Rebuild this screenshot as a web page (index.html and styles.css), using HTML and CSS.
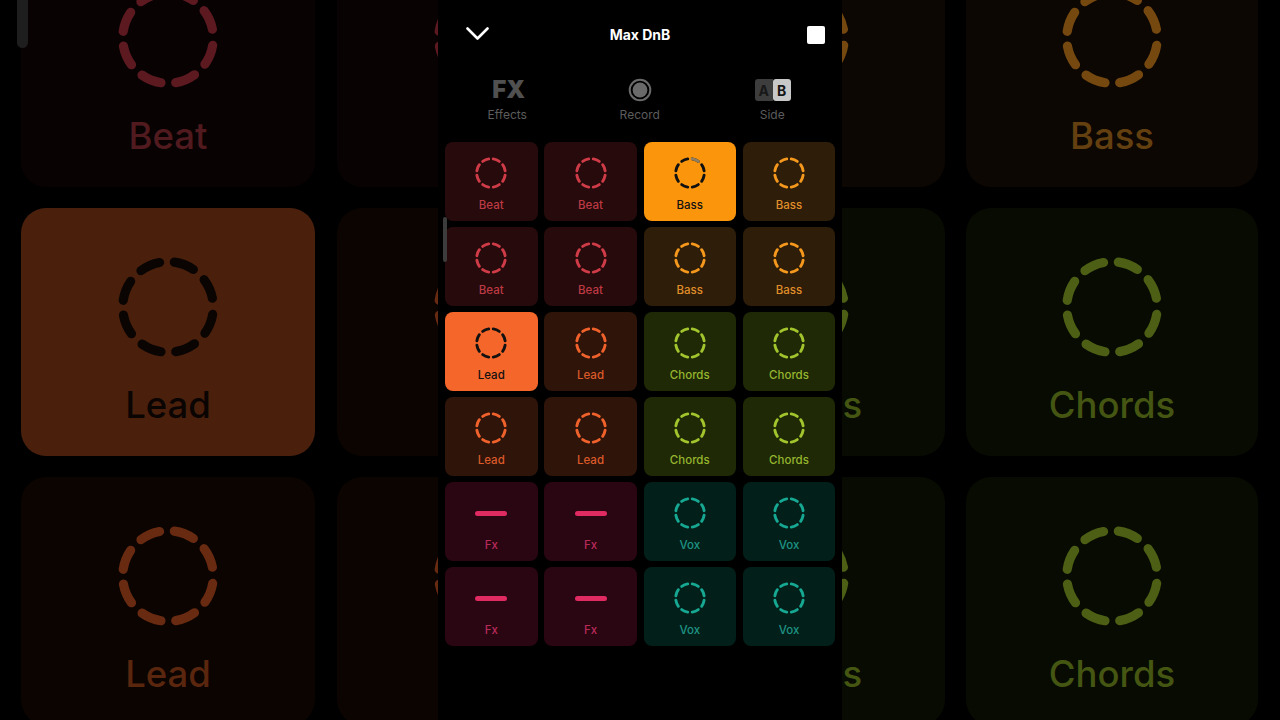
FILE: index.html
```html
<!DOCTYPE html>
<html lang="en">
<head>
<meta charset="utf-8">
<title>Max DnB</title>
<link rel="stylesheet" href="styles.css">
</head>
<body>
<svg class="defs" width="0" height="0" aria-hidden="true">
  <symbol id="ring" viewBox="0 0 36 36"><circle class="dash" cx="18" cy="18" r="14.3" pathLength="80"/></symbol>
</svg>
<main class="stage">
  <aside class="side side-left">
    <div class="big-grid">
      <div class="pad big dim-beat"><svg class="ring"><use href="#ring"/></svg><span class="label">Beat</span></div>
      <div class="pad big dim-beat"><svg class="ring"><use href="#ring"/></svg><span class="label">Beat</span></div>
      <div class="pad big dim-lead-on"><svg class="ring"><use href="#ring"/></svg><span class="label">Lead</span></div>
      <div class="pad big dim-lead"><svg class="ring"><use href="#ring"/></svg><span class="label">Lead</span></div>
      <div class="pad big dim-lead"><svg class="ring"><use href="#ring"/></svg><span class="label">Lead</span></div>
      <div class="pad big dim-lead"><svg class="ring"><use href="#ring"/></svg><span class="label">Lead</span></div>
    </div>
    <div class="scroll-big"></div>
  </aside>

  <section class="phone">
    <header class="topbar">
      <svg class="chevron" viewBox="0 0 23 13"><path d="M1.5 1.5l10 10 10-10"/></svg>
      <h1 class="title">Max DnB</h1>
      <span class="stop"></span>
    </header>
    <nav class="tabs">
      <div class="tab"><span class="tab-icon fx">FX</span><span class="tab-label">Effects</span></div>
      <div class="tab">
        <span class="tab-icon"><svg class="record" viewBox="0 0 24 24"><circle class="record-outer" cx="12" cy="12" r="10.3"/><circle class="record-inner" cx="12" cy="12" r="7.4"/></svg></span>
        <span class="tab-label">Record</span>
      </div>
      <div class="tab">
        <span class="tab-icon ab"><span class="ab-a">A</span><span class="ab-b">B</span></span>
        <span class="tab-label">Side</span>
      </div>
    </nav>
    <div class="scroll-small"></div>
    <div class="grid">
      <div class="pad beat"><svg class="ring"><use href="#ring"/></svg><span class="label">Beat</span></div>
      <div class="pad beat"><svg class="ring"><use href="#ring"/></svg><span class="label">Beat</span></div>
      <div class="pad bass-on"><svg class="ring" viewBox="0 0 36 36"><circle class="dash" cx="18" cy="18" r="14.3" pathLength="80"/><circle class="progress" cx="18" cy="18" r="14.3" pathLength="80"/></svg><span class="label">Bass</span></div>
      <div class="pad bass"><svg class="ring"><use href="#ring"/></svg><span class="label">Bass</span></div>

      <div class="pad beat"><svg class="ring"><use href="#ring"/></svg><span class="label">Beat</span></div>
      <div class="pad beat"><svg class="ring"><use href="#ring"/></svg><span class="label">Beat</span></div>
      <div class="pad bass"><svg class="ring"><use href="#ring"/></svg><span class="label">Bass</span></div>
      <div class="pad bass"><svg class="ring"><use href="#ring"/></svg><span class="label">Bass</span></div>

      <div class="pad lead-on"><svg class="ring"><use href="#ring"/></svg><span class="label">Lead</span></div>
      <div class="pad lead"><svg class="ring"><use href="#ring"/></svg><span class="label">Lead</span></div>
      <div class="pad chords"><svg class="ring"><use href="#ring"/></svg><span class="label">Chords</span></div>
      <div class="pad chords"><svg class="ring"><use href="#ring"/></svg><span class="label">Chords</span></div>

      <div class="pad lead"><svg class="ring"><use href="#ring"/></svg><span class="label">Lead</span></div>
      <div class="pad lead"><svg class="ring"><use href="#ring"/></svg><span class="label">Lead</span></div>
      <div class="pad chords"><svg class="ring"><use href="#ring"/></svg><span class="label">Chords</span></div>
      <div class="pad chords"><svg class="ring"><use href="#ring"/></svg><span class="label">Chords</span></div>

      <div class="pad fx-pad"><span class="bar-box"><span class="bar"></span></span><span class="label">Fx</span></div>
      <div class="pad fx-pad"><span class="bar-box"><span class="bar"></span></span><span class="label">Fx</span></div>
      <div class="pad vox"><svg class="ring"><use href="#ring"/></svg><span class="label">Vox</span></div>
      <div class="pad vox"><svg class="ring"><use href="#ring"/></svg><span class="label">Vox</span></div>

      <div class="pad fx-pad"><span class="bar-box"><span class="bar"></span></span><span class="label">Fx</span></div>
      <div class="pad fx-pad"><span class="bar-box"><span class="bar"></span></span><span class="label">Fx</span></div>
      <div class="pad vox"><svg class="ring"><use href="#ring"/></svg><span class="label">Vox</span></div>
      <div class="pad vox"><svg class="ring"><use href="#ring"/></svg><span class="label">Vox</span></div>
    </div>
  </section>

  <aside class="side side-right">
    <div class="big-grid">
      <div class="pad big dim-bass"><svg class="ring"><use href="#ring"/></svg><span class="label">Bass</span></div>
      <div class="pad big dim-bass"><svg class="ring"><use href="#ring"/></svg><span class="label">Bass</span></div>
      <div class="pad big dim-chords"><svg class="ring"><use href="#ring"/></svg><span class="label">Chords</span></div>
      <div class="pad big dim-chords"><svg class="ring"><use href="#ring"/></svg><span class="label">Chords</span></div>
      <div class="pad big dim-chords"><svg class="ring"><use href="#ring"/></svg><span class="label">Chords</span></div>
      <div class="pad big dim-chords"><svg class="ring"><use href="#ring"/></svg><span class="label">Chords</span></div>
    </div>
  </aside>
</main>
</body>
</html>
```

FILE: styles.css
```css
* { box-sizing: border-box; }
html, body { margin: 0; height: 100%; background: #000; }
body { font-family: Inter, "Noto Sans", "Liberation Sans", sans-serif; overflow: hidden; }
.defs { position: absolute; }

.stage { display: flex; width: 1280px; height: 720px; overflow: hidden; background: #000; }

/* dimmed, enlarged copy of the pad grid on both sides */
.side { position: relative; flex: 0 0 438px; height: 720px; overflow: hidden; }
.big-grid { display: grid; grid-template-columns: 294px 294px; grid-auto-rows: 248px; column-gap: 22px; row-gap: 21px; margin-top: -61px; }
.side-left .big-grid { padding-left: 21px; }
.side-right { display: flex; justify-content: flex-end; }
.side-right .big-grid { flex: none; grid-template-columns: 292px 292px; column-gap: 21px; padding-right: 22px; }
.scroll-big { position: absolute; left: 17px; top: 0; width: 11px; height: 48px; background: #1e1e1e; border-radius: 0 0 6px 6px; }

/* centre */
.phone { position: relative; flex: 0 0 404px; height: 720px; background: #000; }
.topbar { display: flex; align-items: center; justify-content: space-between; height: 70px; padding: 0 17px 0 27.5px; position: relative; }
.chevron { width: 23px; height: 13px; margin-top: -4px; fill: none; stroke: #fff; stroke-width: 2.6; stroke-linecap: round; stroke-linejoin: round; }
.title { margin: 0; font-size: 14px; line-height: 18px; font-weight: 700; color: #fff; position: absolute; left: 0; right: 0; text-align: center; }
.stop { width: 18px; height: 18px; background: #fff; border-radius: 2px; }

.tabs { display: grid; grid-template-columns: repeat(3, 132.5px); padding: 7px 0 0 3px; margin-bottom: 20px; }
.tab { display: flex; flex-direction: column; align-items: center; gap: 4px; }
.tab-icon { display: flex; align-items: center; justify-content: center; height: 26px; }
.tab-label { font-size: 12px; line-height: 15px; color: #5c5c5c; }
.fx { font-size: 24px; font-weight: 900; color: #505050; line-height: 26px; margin-left: 3px; }
.record { width: 24px; height: 24px; }
.record-outer { fill: none; stroke: #6a6a6a; stroke-width: 2; }
.record-inner { fill: #6a6a6a; }
.ab { gap: 0; font-size: 14px; font-weight: 700; color: #151515; margin-left: 1px; }
.ab-a, .ab-b { display: flex; align-items: center; justify-content: center; width: 18px; height: 22px; }
.ab-a { background: #3d3d3d; border-radius: 3px 0 0 3px; color: #181818; }
.ab-b { background: #c8c8c8; border-radius: 3px; }
.scroll-small { position: absolute; left: 5px; top: 217px; width: 4px; height: 45px; background: #3c3c3c; border-radius: 2px; }

.grid { display: grid; grid-template-columns: repeat(4, 92.5px); column-gap: 6.75px; grid-auto-rows: 78.5px; row-gap: 6.5px; padding-left: 7px; }

/* pad */
.pad { display: flex; flex-direction: column; align-items: center; border-radius: 8px; padding-top: 13px; color: var(--fg); background: var(--bg); }
.ring { display: block; width: 36px; height: 36px; flex: none; color: var(--ring); }
.dash { fill: none; stroke: currentColor; stroke-width: 2.9; stroke-linecap: round; stroke-dasharray: 5.8 4.2; stroke-dashoffset: -2.1; }
.progress { fill: none; stroke: #917f62; stroke-width: 2.9; stroke-linecap: round; stroke-dasharray: 5.8 74.2; stroke-dashoffset: -62.1; }
.label { margin-top: 6.5px; font-size: 11.5px; line-height: 14px; font-weight: 500; }
.bar-box { display: flex; align-items: center; height: 36px; }
.bar { width: 32px; height: 5px; border-radius: 3px; background: var(--ring); }

.pad.big { border-radius: 25px; padding-top: 41.5px; }
.big .ring { width: 114px; height: 114px; }
.big .label { margin-top: 19px; font-size: 36.5px; line-height: 44px; font-weight: 500; }

.beat { --bg: #270a0b; --ring: #cf3c48; --fg: #bd3a44; }
.bass { --bg: #2e1d08; --ring: #f5981e; --fg: #e08e2a; }
.lead { --bg: #2f1409; --ring: #f0622c; --fg: #dc5a2a; }
.chords { --bg: #1f2906; --ring: #a2c52e; --fg: #96b52e; }
.fx-pad { --bg: #2a0612; --ring: #e02a62; --fg: #b82a58; }
.vox { --bg: #022019; --ring: #17a893; --fg: #1f9384; }
.bass-on { --bg: #fb950c; --ring: #111; --fg: #111; }
.lead-on { --bg: #f4662a; --ring: #111; --fg: #111; }

.dim-beat { --bg: #090203; --ring: #5c1a20; --fg: #501a1e; }
.dim-bass { --bg: #0c0702; --ring: #754810; --fg: #644010; }
.dim-lead { --bg: #0b0401; --ring: #682a10; --fg: #5a260e; }
.dim-lead-on { --bg: #4a200c; --ring: #0a0503; --fg: #0a0503; }
.dim-chords { --bg: #080b02; --ring: #4c5f14; --fg: #445612; }
```
